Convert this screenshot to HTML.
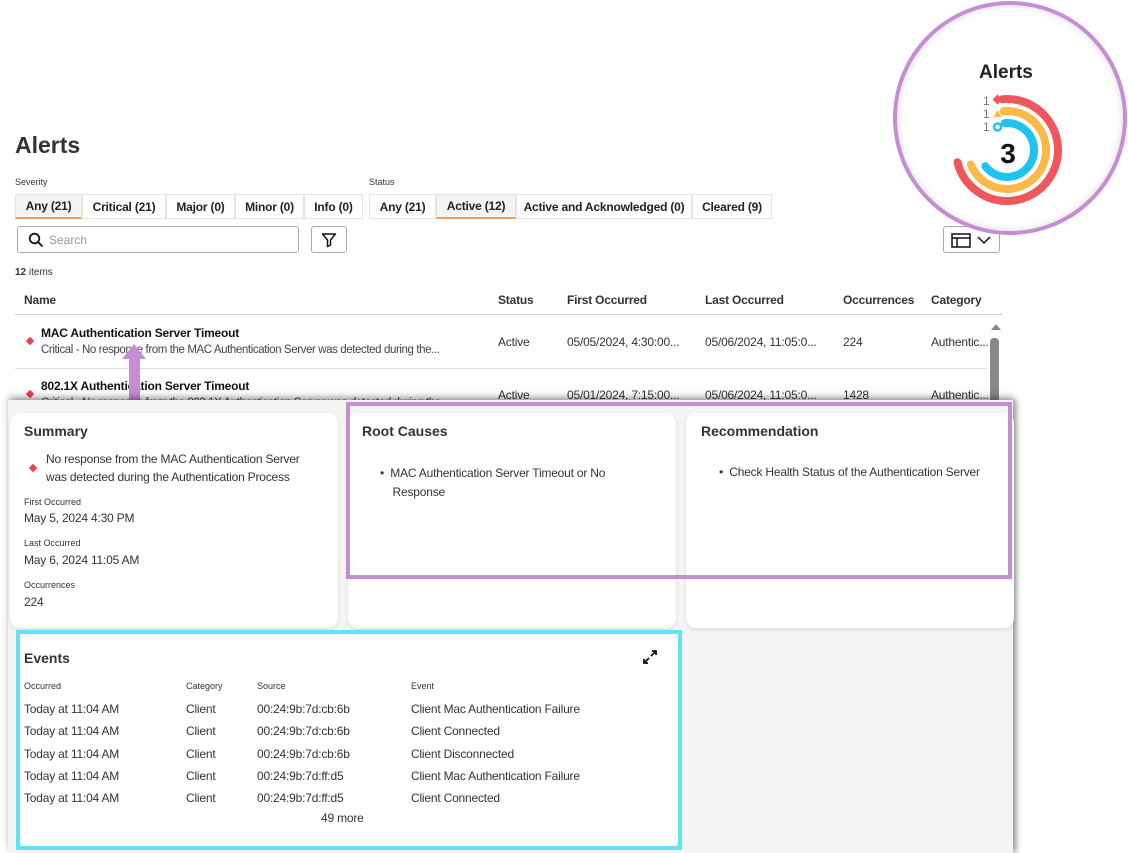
<!DOCTYPE html>
<html><head><meta charset="utf-8"><style>
*{box-sizing:border-box;margin:0;padding:0}
body{width:1128px;height:853px;overflow:hidden;background:#fff;font-family:"Liberation Sans",sans-serif;color:#222;position:relative}
.a{position:absolute;white-space:nowrap}
.b{font-weight:bold}
.tab{position:absolute;top:194px;height:25px;border:1px solid #e4e4e4;font-size:12px;font-weight:bold;display:flex;align-items:center;justify-content:center;background:#fff;letter-spacing:-0.2px}
.tab.sel{background:#f4f4f4;border-bottom:2px solid #f0a050}
.card{position:absolute;background:#fff;border-radius:10px;box-shadow:0 2px 5px rgba(0,0,0,.1)}
.h{font-size:14px;font-weight:bold;color:#333}
.sm{font-size:9px;color:#333}
.t{font-size:12px;color:#333;letter-spacing:-0.2px}
</style></head><body>

<div class="a b" style="left:15px;top:132px;font-size:23px;color:#333">Alerts</div>
<div class="a sm" style="left:15px;top:177px">Severity</div>
<div class="a sm" style="left:369px;top:177px">Status</div>

<div class="tab sel" style="left:15px;width:67px">Any (21)</div>
<div class="tab" style="left:82px;width:84px">Critical (21)</div>
<div class="tab" style="left:166px;width:69px">Major (0)</div>
<div class="tab" style="left:235px;width:69px">Minor (0)</div>
<div class="tab" style="left:304px;width:59px">Info (0)</div>
<div class="tab" style="left:369px;width:67px">Any (21)</div>
<div class="tab sel" style="left:436px;width:80px">Active (12)</div>
<div class="tab" style="left:516px;width:176px">Active and Acknowledged (0)</div>
<div class="tab" style="left:692px;width:80px">Cleared (9)</div>

<div class="a" style="left:17px;top:226px;width:282px;height:27px;border:1px solid #aaa;border-radius:3px"></div>
<svg class="a" style="left:28px;top:232px" width="16" height="16" viewBox="0 0 16 16"><circle cx="6.5" cy="6.5" r="4.8" fill="none" stroke="#111" stroke-width="1.8"/><path d="M10 10l4.5 4.5" stroke="#111" stroke-width="1.8"/></svg>
<div class="a" style="left:49px;top:233px;font-size:12px;color:#999">Search</div>
<div class="a" style="left:311px;top:226px;width:36px;height:27px;border:1px solid #aaa;border-radius:3px"></div>
<svg class="a" style="left:321px;top:232px" width="16" height="16" viewBox="0 0 16 16"><path d="M1.5 2h13l-5 6v5l-3 1.5V8z" fill="none" stroke="#111" stroke-width="1.5" stroke-linejoin="round"/></svg>
<div class="a" style="left:943px;top:226px;width:57px;height:27px;border:1px solid #aaa;border-radius:3px"></div>
<svg class="a" style="left:951px;top:232px" width="44" height="16" viewBox="0 0 44 16"><rect x="1" y="2" width="18" height="13" fill="none" stroke="#111" stroke-width="1.5"/><path d="M1 6h18M6 6v9" stroke="#111" stroke-width="1.5"/><path d="M27 5l6 6 6-6" fill="none" stroke="#111" stroke-width="1.5"/></svg>

<div class="a" style="left:15px;top:267px;font-size:10px;color:#333"><b>12</b> items</div>

<div class="a b t" style="left:24px;top:293px">Name</div>
<div class="a b t" style="left:498px;top:293px">Status</div>
<div class="a b t" style="left:567px;top:293px">First Occurred</div>
<div class="a b t" style="left:705px;top:293px">Last Occurred</div>
<div class="a b t" style="left:843px;top:293px">Occurrences</div>
<div class="a b t" style="left:931px;top:293px">Category</div>
<div class="a" style="left:15px;top:314px;width:987px;height:1px;background:#ccc"></div>

<div class="a" style="left:27px;top:338px;width:6px;height:6px;background:#e8434f;transform:rotate(45deg)"></div>
<div class="a b t" style="left:41px;top:326px;color:#111">MAC Authentication Server Timeout</div>
<div class="a t" style="left:41px;top:344px;color:#444;font-size:11.5px;letter-spacing:-0.4px">Critical - No response from the MAC Authentication Server was detected during the...</div>
<div class="a t" style="left:498px;top:335px">Active</div>
<div class="a t" style="left:567px;top:335px">05/05/2024, 4:30:00...</div>
<div class="a t" style="left:705px;top:335px">05/06/2024, 11:05:0...</div>
<div class="a t" style="left:843px;top:335px">224</div>
<div class="a t" style="left:931px;top:335px">Authentic...</div>
<div class="a" style="left:15px;top:368px;width:972px;height:1px;background:#ddd"></div>
<div class="a" style="left:27px;top:391px;width:6px;height:6px;background:#e8434f;transform:rotate(45deg)"></div>
<div class="a b t" style="left:41px;top:379px;color:#111">802.1X Authentication Server Timeout</div>
<div class="a t" style="left:41px;top:397px;color:#444;font-size:11.5px;letter-spacing:-0.4px">Critical - No response from the 802.1X Authentication Server was detected during the...</div>
<div class="a t" style="left:498px;top:388px">Active</div>
<div class="a t" style="left:567px;top:388px">05/01/2024, 7:15:00...</div>
<div class="a t" style="left:705px;top:388px">05/06/2024, 11:05:0...</div>
<div class="a t" style="left:843px;top:388px">1428</div>
<div class="a t" style="left:931px;top:388px">Authentic...</div>
<div class="a" style="left:991px;top:324px;width:0;height:0;border-left:5px solid transparent;border-right:5px solid transparent;border-bottom:6px solid #888"></div>
<div class="a" style="left:990px;top:338px;width:9px;height:64px;background:#888;border-radius:4px"></div>

<!-- purple arrow -->
<div class="a" style="left:129px;top:358px;width:11px;height:42px;background:#c78dd4"></div>
<div class="a" style="left:122px;top:344px;width:0;height:0;border-left:12px solid transparent;border-right:12px solid transparent;border-bottom:15px solid #c78dd4"></div>

<!-- overlay panel -->
<div class="a" style="left:8px;top:400px;width:1005px;height:453px;background:#f5f5f5;box-shadow:0 -4px 6px rgba(0,0,0,.25),4px 0 5px rgba(0,0,0,.3)"></div>

<div class="card" style="left:10px;top:413px;width:328px;height:215px"></div>
<div class="a h" style="left:24px;top:423px">Summary</div>
<div class="a" style="left:30px;top:465px;width:6px;height:6px;background:#e8434f;transform:rotate(45deg)"></div>
<div class="a t" style="left:46px;top:450px;line-height:18px">No response from the MAC Authentication Server<br>was detected during the Authentication Process</div>
<div class="a sm" style="left:24px;top:497px">First Occurred</div>
<div class="a t" style="left:24px;top:511px">May 5, 2024 4:30 PM</div>
<div class="a sm" style="left:24px;top:538px">Last Occurred</div>
<div class="a t" style="left:24px;top:553px">May 6, 2024 11:05 AM</div>
<div class="a sm" style="left:24px;top:580px">Occurrences</div>
<div class="a t" style="left:24px;top:595px">224</div>

<div class="card" style="left:348px;top:413px;width:328px;height:215px"></div>
<div class="a h" style="left:362px;top:423px">Root Causes</div>
<div class="a t" style="left:380px;top:464px;line-height:19px">•&nbsp;&nbsp;MAC Authentication Server Timeout or No<br>&nbsp;&nbsp;&nbsp;&nbsp;Response</div>

<div class="card" style="left:686px;top:413px;width:328px;height:215px"></div>
<div class="a h" style="left:701px;top:423px">Recommendation</div>
<div class="a t" style="left:719px;top:465px">•&nbsp;&nbsp;Check Health Status of the Authentication Server</div>

<div class="card" style="left:19px;top:636px;width:660px;height:211px"></div>
<div class="a h" style="left:24px;top:650px">Events</div>
<svg class="a" style="left:643px;top:650px" width="14" height="14" viewBox="0 0 14 14"><path d="M8 6l5-5M9 1h4v4M6 8l-5 5M1 9v4h4" fill="none" stroke="#111" stroke-width="1.8"/></svg>
<div class="a sm" style="left:24px;top:681px">Occurred</div>
<div class="a sm" style="left:186px;top:681px">Category</div>
<div class="a sm" style="left:257px;top:681px">Source</div>
<div class="a sm" style="left:411px;top:681px">Event</div>
<div class="a t" style="left:24px;top:698px;line-height:22.3px">Today at 11:04 AM<br>Today at 11:04 AM<br>Today at 11:04 AM<br>Today at 11:04 AM<br>Today at 11:04 AM</div>
<div class="a t" style="left:186px;top:698px;line-height:22.3px">Client<br>Client<br>Client<br>Client<br>Client</div>
<div class="a t" style="left:257px;top:698px;line-height:22.3px">00:24:9b:7d:cb:6b<br>00:24:9b:7d:cb:6b<br>00:24:9b:7d:cb:6b<br>00:24:9b:7d:ff:d5<br>00:24:9b:7d:ff:d5</div>
<div class="a t" style="left:411px;top:698px;line-height:22.3px">Client Mac Authentication Failure<br>Client Connected<br>Client Disconnected<br>Client Mac Authentication Failure<br>Client Connected</div>
<div class="a t" style="left:321px;top:811px">49 more</div>

<!-- highlight boxes -->
<div class="a" style="left:346px;top:402px;width:666px;height:177px;border:4px solid #c78dd4"></div>
<div class="a" style="left:16px;top:630px;width:666px;height:220px;border:4px solid #62e3f5"></div>

<!-- magnifier circle -->
<div class="a" style="left:893px;top:1px;width:234px;height:234px;border-radius:50%;background:#fff;border:4px solid #c78dd4;box-shadow:inset 0 0 8px rgba(0,0,0,.15)"></div>
<div class="a b" style="left:979px;top:62px;font-size:19px;color:#222">Alerts</div>
<svg class="a" style="left:940px;top:85px" width="140" height="130" viewBox="940 85 140 130">
<circle cx="1007" cy="150" r="51" fill="none" stroke="#f0575c" stroke-width="8" stroke-linecap="round" stroke-dasharray="232 400" transform="rotate(-95 1007 150)"/>
<circle cx="1007" cy="150" r="39" fill="none" stroke="#fbb94a" stroke-width="8" stroke-linecap="round" stroke-dasharray="172 400" transform="rotate(-95 1007 150)"/>
<circle cx="1007" cy="150" r="27" fill="none" stroke="#1fc3ef" stroke-width="8" stroke-linecap="round" stroke-dasharray="112 400" transform="rotate(-95 1007 150)"/>
<text x="1008" y="163" font-family="Liberation Sans" font-weight="bold" font-size="28" text-anchor="middle" fill="#111">3</text>
<g font-family="Liberation Sans" font-size="12" fill="#777"><text x="983" y="105">1</text><text x="983" y="118">1</text><text x="983" y="131">1</text></g>
<rect x="994" y="96" width="7" height="7" fill="#f0575c" transform="rotate(45 997.5 99.5)"/>
<path d="M993.5 117l4-7 4 7z" fill="#fbb94a"/>
<circle cx="997.5" cy="127" r="3.5" fill="none" stroke="#1fc3ef" stroke-width="2.5"/>
</svg>
</body></html>
